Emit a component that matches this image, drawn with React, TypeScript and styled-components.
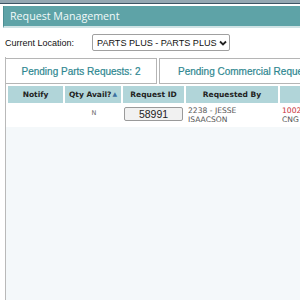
import React from "react";
import styled, { createGlobalStyle } from "styled-components";

const GlobalStyle = createGlobalStyle`
  html, body {
    margin: 0;
    padding: 0;
    background: #ffffff;
  }
`;

const Page = styled.div`
  width: 300px;
  height: 300px;
  overflow: hidden;
  background: #ffffff;
  display: flex;
  flex-direction: column;
`;

const TopStrip = styled.div`
  height: 3px;
  background: #94a8b2;
  border-bottom: 1px solid #3e5565;
  flex-shrink: 0;
`;

const TitleBar = styled.div`
  margin: 2px 0 0 3px;
  height: 20px;
  background: #5ea3a7;
  border-left: 1px solid #4d8e93;
  border-bottom: 2px solid #cfe3e5;
  display: flex;
  align-items: center;
  padding-left: 6px;
  flex-shrink: 0;
  color: #f2fafa;
  font-family: "Open Sans", "Liberation Sans", sans-serif;
  font-size: 10.7px;
`;

const LocationRow = styled.div`
  height: 29px;
  display: flex;
  align-items: center;
  padding-left: 5px;
  flex-shrink: 0;
  font-family: "Liberation Sans", Arial, sans-serif;
  font-size: 9px;
  color: #111;
`;

const LocationLabel = styled.span`
  width: 87px;
`;

const FakeSelect = styled.div`
  width: 130px;
  height: 15px;
  border: 1px solid #a0a0a0;
  border-radius: 2px;
  display: flex;
  align-items: center;
  justify-content: space-between;
  padding: 0 2px 0 4px;
  box-sizing: content-box;
  font-size: 9.1px;
  color: #111;
  background: #fff;
  white-space: nowrap;
`;

const Panel = styled.div`
  flex: 1;
  margin-left: 5px;
  border-left: 1px solid #b9b9b9;
  background: #f4f8fa;
  display: flex;
  flex-direction: column;
`;

const TabRow = styled.div`
  display: flex;
  gap: 2px;
  padding-top: 1px;
  background: #fff;
  flex-shrink: 0;
`;

const Tab = styled.div<{ $first?: boolean }>`
  width: ${(p) => (p.$first ? "151px" : "200px")};
  flex-shrink: 0;
  height: 26px;
  border: 1px solid #b5b5b5;
  border-left: ${(p) => (p.$first ? "none" : "1px solid #b5b5b5")};
  background: #fff;
  display: flex;
  align-items: center;
  justify-content: ${(p) => (p.$first ? "center" : "flex-start")};
  padding-left: ${(p) => (p.$first ? "0" : "18px")};
  box-sizing: border-box;
  color: #2e8790;
  font-family: "Liberation Sans", Arial, sans-serif;
  font-size: 10px;
  -webkit-text-stroke: 0.2px #2e8790;
  white-space: nowrap;
  overflow: hidden;
`;

const TableWrap = styled.div`
  overflow: hidden;
  flex-shrink: 0;
`;

const Table = styled.table`
  border-spacing: 2px;
  background: #fff;
  table-layout: fixed;
  width: 386px;
  font-family: "DejaVu Sans", Verdana, sans-serif;
`;

const Th = styled.th<{ $w: number }>`
  width: ${(p) => p.$w}px;
  height: 17px;
  padding: 0;
  background: #b1d5d9;
  color: #222;
  font-size: 7.5px;
  font-weight: bold;
  text-align: center;
  white-space: nowrap;
`;

const Td = styled.td<{ $align?: string }>`
  height: 19px;
  padding: 1px 0 0 2px;
  font-size: 7.6px;
  color: #555555;
  text-align: ${(p) => p.$align || "left"};
  vertical-align: top;
  line-height: 9px;
  white-space: nowrap;
`;

const IdBox = styled.div`
  margin: 1px 1px 0 -1px;
  height: 12px;
  border: 1px solid #9a9a9a;
  border-radius: 2px;
  background: #f1f1f1;
  display: flex;
  align-items: center;
  justify-content: center;
  font-family: "Liberation Sans", Arial, sans-serif;
  font-size: 10.5px;
  color: #222;
`;

const Small = styled.span`
  font-size: 6.5px;
  color: #666666;
  position: relative;
  top: 2px;
`;

const Red = styled.span`
  color: #c8323a;
`;

const SortArrow = styled.span`
  font-size: 6px;
  color: #3a6fa0;
  margin-left: 1px;
  vertical-align: 1px;
`;

export default function App() {
  return (
    <Page>
      <GlobalStyle />
      <TopStrip />
      <TitleBar>Request Management</TitleBar>
      <LocationRow>
        <LocationLabel>Current Location:</LocationLabel>
        <FakeSelect>
          <span>PARTS PLUS - PARTS PLUS</span>
          <svg width="8" height="6" viewBox="0 0 8 6">
            <path d="M1 1.5 L4 4.5 L7 1.5" stroke="#222" strokeWidth="1.8" fill="none" />
          </svg>
        </FakeSelect>
      </LocationRow>
      <Panel>
        <TabRow>
          <Tab $first>Pending Parts Requests: 2</Tab>
          <Tab>Pending Commercial Requests</Tab>
        </TabRow>
        <TableWrap>
          <Table>
            <thead>
              <tr>
                <Th $w={55}>Notify</Th>
                <Th $w={56}>
                  Qty Avail?<SortArrow>▲</SortArrow>
                </Th>
                <Th $w={61}>Request ID</Th>
                <Th $w={92}>Requested By</Th>
                <Th $w={110}></Th>
              </tr>
            </thead>
            <tbody>
              <tr>
                <Td></Td>
                <Td $align="center">
                  <Small>N</Small>
                </Td>
                <Td>
                  <IdBox>58991</IdBox>
                </Td>
                <Td>
                  2238 - JESSE
                  <br />
                  ISAACSON
                </Td>
                <Td>
                  <Red>10024</Red>
                  <br />
                  CNG 2
                </Td>
              </tr>
            </tbody>
          </Table>
        </TableWrap>
      </Panel>
    </Page>
  );
}
